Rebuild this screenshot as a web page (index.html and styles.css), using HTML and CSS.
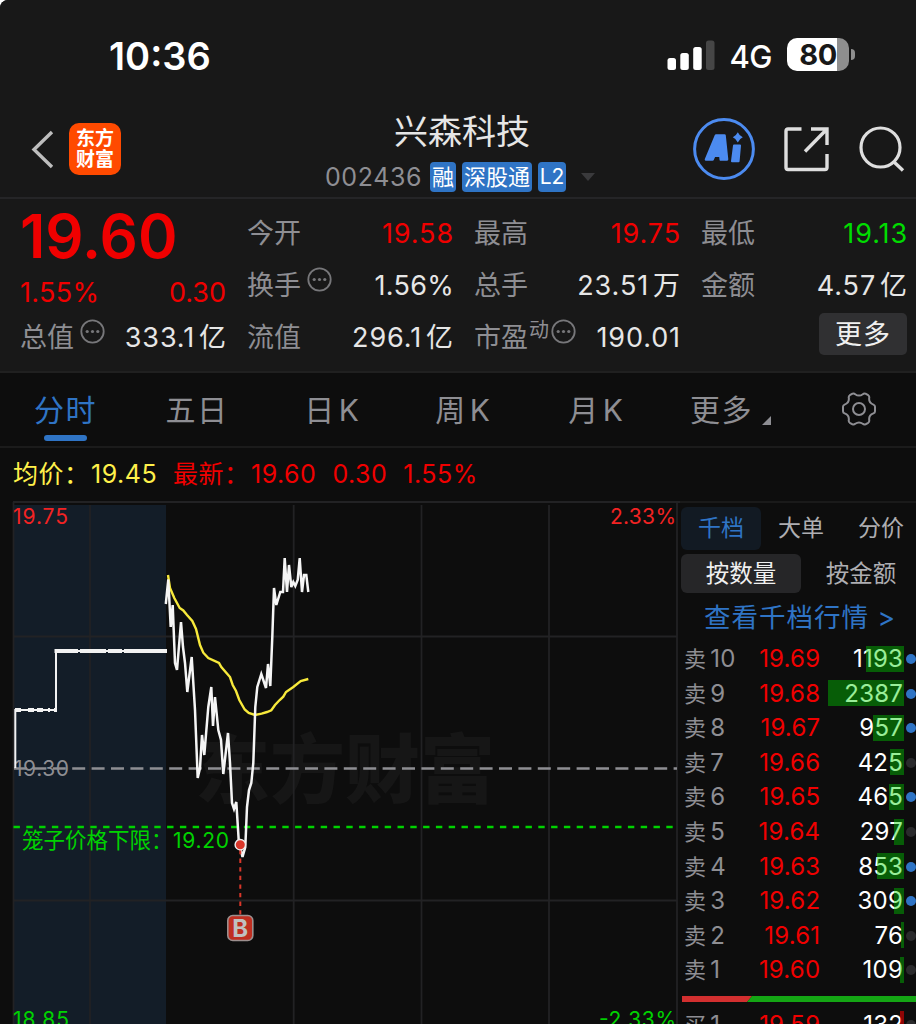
FILE: index.html
```html
<!DOCTYPE html>
<html lang="zh-CN">
<head>
    <meta charset="UTF-8">
    <meta name="viewport" content="width=device-width, initial-scale=1.0">
    <title>兴森科技 002436</title>
    <link rel="stylesheet" href="styles.css">
</head>
<body>
    <div class="app">
        <div class="status-bar">
            <span class="clock">10:36</span>
            <div class="status-icons">
                <svg class="signal" width="48" height="32" viewBox="0 0 48 32">
                    <rect x="0.5" y="18" width="8.5" height="12" rx="2.5" fill="#fff"/>
                    <rect x="13.3" y="13" width="8.5" height="17" rx="2.5" fill="#fff"/>
                    <rect x="26.2" y="7" width="8.5" height="23" rx="2.5" fill="#fff"/>
                    <rect x="39" y="0.5" width="8.5" height="29.5" rx="2.5" fill="#464646"/>
                </svg>
                <span class="network">4G</span>
                <div class="battery"><span>80</span></div>
                <div class="battery-cap"></div>
            </div>
        </div>

        <header class="header">
            <div class="header-left">
                <svg width="26" height="40" viewBox="0 0 26 40">
                    <path d="M22 3 L4 20.5 L22 38" fill="none" stroke="#bdbdbd" stroke-width="3.4"/>
                </svg>
                <div class="logo"><span>东方</span><span>财富</span></div>
            </div>
            <div class="header-title">
                <h1>兴森科技</h1>
                <div class="stock-code">
                    <span class="code">002436</span>
                    <span class="tag tag-rong">融</span>
                    <span class="tag tag-sgt">深股通</span>
                    <span class="tag tag-l2">L2</span>
                    <span class="caret"></span>
                </div>
            </div>
            <div class="header-right">
                <svg width="62" height="62" viewBox="0 0 62 62">
                    <circle cx="31" cy="31" r="29.4" fill="none" stroke="#4c8bf0" stroke-width="3"/>
                    <path fill="#4c8bf0" stroke="#4c8bf0" stroke-width="2.6" stroke-linejoin="round" fill-rule="evenodd" d="M23 17.5 H31.5 L34 41.5 H27.8 L27.4 37.6 H21.3 L19.6 41.5 H13 Z M26.8 25.8 L23.8 32.6 H27.2 Z"/>
                    <path fill="#4c8bf0" stroke="#4c8bf0" stroke-width="2" stroke-linejoin="round" d="M41 27.6 H47 L45.6 43.2 H39 Z"/>
                    <path fill="#4c8bf0" d="M44.8 14.2 Q46.5 17.8 49.8 19.3 Q46.5 20.8 44.8 24.4 Q43.1 20.8 39.8 19.3 Q43.1 17.8 44.8 14.2 Z"/>
                </svg>
                <svg class="icon-share" width="46" height="46" viewBox="0 0 46 46">
                    <path d="M17.5 3 H4 Q2 3 2 5 V41.5 Q2 43.5 4 43.5 H41 Q43 43.5 43 41.5 V28" fill="none" stroke="#dedede" stroke-width="3.4"/>
                    <path d="M27 3 H43 V19 M43 3 L21 25.5" fill="none" stroke="#dedede" stroke-width="3.4"/>
                </svg>
                <svg class="icon-search" width="48" height="48" viewBox="0 0 48 48">
                    <circle cx="21.5" cy="21.5" r="19.5" fill="none" stroke="#dedede" stroke-width="3.2"/>
                    <path d="M34.5 35.5 L44 44.5" stroke="#dedede" stroke-width="3.4"/>
                </svg>
            </div>
        </header>

        <section class="quote">
            <div class="quote-col">
                <div class="price">19.60</div>
                <div class="change"><span class="pct">1.55%</span><span>0.30</span></div>
                <div class="item">
                    <span class="label">总值<svg class="info" viewBox="0 0 25 25"><use href="#info"/></svg></span>
                    <span class="value">333.1<i>亿</i></span>
                </div>
            </div>
            <div class="quote-col">
                <div class="item"><span class="label">今开</span><span class="value red">19.58</span></div>
                <div class="item">
                    <span class="label">换手<svg class="info" viewBox="0 0 25 25"><use href="#info"/></svg></span>
                    <span class="value pct">1.56%</span>
                </div>
                <div class="item"><span class="label">流值</span><span class="value">296.1<i>亿</i></span></div>
            </div>
            <div class="quote-col">
                <div class="item"><span class="label">最高</span><span class="value red">19.75</span></div>
                <div class="item"><span class="label">总手</span><span class="value">23.51<i>万</i></span></div>
                <div class="item">
                    <span class="label">市盈<sup>动</sup><svg class="info info-tight" viewBox="0 0 25 25"><use href="#info"/></svg></span>
                    <span class="value">190.01</span>
                </div>
            </div>
            <div class="quote-col">
                <div class="item"><span class="label">最低</span><span class="value green">19.13</span></div>
                <div class="item"><span class="label">金额</span><span class="value">4.57<i>亿</i></span></div>
                <div class="item item-more"><button class="more-btn">更多</button></div>
            </div>
        </section>

        <nav class="tabs">
            <a class="tab active">分时</a>
            <a class="tab">五日</a>
            <a class="tab"><span>日<b>K</b></span></a>
            <a class="tab"><span>周<b>K</b></span></a>
            <a class="tab"><span>月<b>K</b></span></a>
            <a class="tab tab-more">更多<span class="corner"></span></a>
            <a class="tab tab-settings">
                <svg width="36" height="34" viewBox="0 0 36 34">
                    <path fill="none" stroke="#8e8e93" stroke-width="2" stroke-linejoin="round" d="M11.5 1.6 Q13 1 14.2 2.2 Q18 5 21.8 2.2 Q23 1 24.5 1.6 L27.2 3.2 Q28.6 4.2 28.2 6 Q27.6 10.8 32.4 12.6 Q34 13.2 34 14.8 V19.2 Q34 20.8 32.4 21.4 Q27.6 23.2 28.2 28 Q28.6 29.8 27.2 30.8 L24.5 32.4 Q23 33 21.8 31.8 Q18 29 14.2 31.8 Q13 33 11.5 32.4 L8.8 30.8 Q7.4 29.8 7.8 28 Q8.4 23.2 3.6 21.4 Q2 20.8 2 19.2 V14.8 Q2 13.2 3.6 12.6 Q8.4 10.8 7.8 6 Q7.4 4.2 8.8 3.2 Z"/>
                    <circle cx="18" cy="17" r="6" fill="none" stroke="#8e8e93" stroke-width="2"/>
                </svg>
            </a>
        </nav>

        <div class="summary">
            <span class="avg">均价：<b>19.45</b></span>
            <span class="latest">最新：<b>19.60</b></span>
            <span class="latest">0.30</span>
            <span class="latest">1.55%</span>
        </div>

        <main class="main">
            <svg class="chart" width="680" height="523" viewBox="0 501 680 523">
                <rect x="14" y="505" width="152" height="519" fill="#131d28"/>
                <text class="watermark" x="195" y="797" textLength="300">东方财富</text>

                <!-- grid -->
                <g stroke="#222224" stroke-width="1.8">
                    <path d="M13 502 H680 M13.5 502 V1024 M677 502 V1024"/>
                    <path d="M90 505 V1024 M293.7 505 V1024 M421.5 505 V1024 M549 505 V1024"/>
                    <path d="M13 636.5 H677 M13 900.5 H677"/>
                </g>

                <text class="axis" x="13" y="523.5" textLength="55" fill="#f22323">19.75</text>
                <text class="axis" x="610" y="523.5" textLength="66" fill="#f22323">2.33%</text>
                <text class="axis" x="14" y="775.5" textLength="55" fill="#8e8e93">19.30</text>
                <text class="axis" x="13" y="1027" textLength="56" fill="#00d200">18.85</text>
                <text class="axis" x="599" y="1027" textLength="77" fill="#00d200">-2.33%</text>

                <path d="M14 768.5 H677" stroke="#8e8e93" stroke-width="2.4" stroke-dasharray="13 6.4"/>
                <path d="M13.5 827 H677" stroke="#00d200" stroke-width="2.4" stroke-dasharray="6.4 6.4"/>
                <text class="limit" x="22" y="848">笼子价格下限：</text>
                <text class="axis" x="173" y="848" textLength="56" fill="#00d200">19.20</text>

                <!-- pre-open -->
                <path d="M15.3 768 V710 H56 V651 H167" fill="none" stroke="#f2f2f2" stroke-width="2"/>
                <path d="M15 710 H21 M28 710 H34 M37 710 H43 M48 710 H50 M54 710 H57 M54.5 651 H78 M80 651 H106 M108 651 H122 M124 651 H167" stroke="#f2f2f2" stroke-width="4"/>

                <polyline class="line-avg" points="168,575 170,588 174.3,598 179.7,608 183.3,610.5 187,615 192.3,621 196,629 200,645 203.3,652.7 208.3,658 219,663 221.3,667 230,677 232.7,685 236,691 239.3,700 244.7,709.5 248.7,713 255,715 261.7,713.7 267,712 271.3,710.3 275,705 279.7,700 283.3,696.7 286,692 293.3,687 300.7,681 308.3,679"/>
                <polyline class="line-price" points="165.8,604 168.3,579.5 170.7,627 172.7,605 175,663 177,670 181,622 183,647 185,663 187.3,692 191.7,657 195,710 197.7,778 200,768 202,735 204.3,755 208.3,707 211.3,687 213,726 215,697 218.3,730 221,740 223.3,774 228,733 230,763 232,803 234,809 236.3,802 238.7,840 242.5,857 245.3,847 247,807 249,790 251.3,783 253.3,763 255.3,707 257.3,687 261.3,674 266,688 268,664 270.3,686 272.3,637 274,588 276.3,605 280.3,592 283,592 284.7,558 287,592 289,565 291.3,587 293.3,582 295.3,586 297.7,580 299.7,558 302,592 304,575 306.3,575 308.3,592"/>

                <!-- buy marker -->
                <path d="M240.3 850 V915" stroke="#d9372a" stroke-width="2" stroke-dasharray="4.3 4.3"/>
                <circle cx="240.3" cy="844.7" r="5.2" fill="#d9372a" stroke="#eee" stroke-width="1.4"/>
                <rect x="227.8" y="915.5" width="25" height="25" rx="5" fill="#bf2e20" stroke="#9c8f8e" stroke-width="1.6"/>
                <text class="buy" x="240.3" y="936.5">B</text>
            </svg>

            <aside class="book">
                <div class="book-tabs">
                    <span class="book-tab active">千档</span>
                    <span class="book-tab">大单</span>
                    <span class="book-tab">分价</span>
                </div>
                <div class="book-modes">
                    <span class="mode active">按数量</span>
                    <span class="mode">按金额</span>
                </div>
                <a class="book-link">查看千档行情 <b>&gt;</b></a>
                <ul class="levels">
                    <li><span class="lv">卖<b>10</b></span><span class="px">19.69</span><span class="vol">1193<i style="width:38px"></i></span><em class="on"></em></li>
                    <li><span class="lv">卖<b>9</b></span><span class="px">19.68</span><span class="vol">2387<i style="width:76px"></i></span><em class="on"></em></li>
                    <li><span class="lv">卖<b>8</b></span><span class="px">19.67</span><span class="vol">957<i style="width:30.5px"></i></span><em class="on"></em></li>
                    <li><span class="lv">卖<b>7</b></span><span class="px">19.66</span><span class="vol">425<i style="width:13.5px"></i></span><em></em></li>
                    <li><span class="lv">卖<b>6</b></span><span class="px">19.65</span><span class="vol">465<i style="width:15px"></i></span><em class="on"></em></li>
                    <li><span class="lv">卖<b>5</b></span><span class="px">19.64</span><span class="vol">297<i style="width:9.5px"></i></span><em></em></li>
                    <li><span class="lv">卖<b>4</b></span><span class="px">19.63</span><span class="vol">853<i style="width:27px"></i></span><em class="on"></em></li>
                    <li><span class="lv">卖<b>3</b></span><span class="px">19.62</span><span class="vol">309<i style="width:10px"></i></span><em class="on"></em></li>
                    <li><span class="lv">卖<b>2</b></span><span class="px">19.61</span><span class="vol">76<i style="width:2.5px"></i></span><em></em></li>
                    <li><span class="lv">卖<b>1</b></span><span class="px">19.60</span><span class="vol">109<i style="width:3.5px"></i></span><em></em></li>
                </ul>
                <svg class="ratio" width="234" height="6" viewBox="0 0 234 6">
                    <path d="M0 0 H70 L65 6 H0 Z" fill="#d22f2f"/>
                    <path d="M70 0 H234 V6 H65 Z" fill="#14a514"/>
                </svg>
                <ul class="levels buy-levels">
                    <li><span class="lv">买<b>1</b></span><span class="px">19.59</span><span class="vol">132<i style="width:4px"></i></span><em></em></li>
                </ul>
            </aside>
        </main>
    </div>

    <svg class="defs" width="0" height="0">
        <symbol id="info" viewBox="0 0 25 25">
            <circle cx="12.5" cy="12.5" r="11.2" fill="none" stroke="#77777a" stroke-width="1.8"/>
            <circle cx="7.2" cy="12.5" r="1.6" fill="#77777a"/>
            <circle cx="12.5" cy="12.5" r="1.6" fill="#77777a"/>
            <circle cx="17.8" cy="12.5" r="1.6" fill="#77777a"/>
        </symbol>
    </svg>
</body>
</html>
```
FILE: styles.css
```css
* {
    box-sizing: border-box;
}
body {
    margin: 0;
    background: #fff;
    font-family: Inter, "Noto Sans CJK SC", sans-serif;
    color: #e6e6e6;
}
b, i, em {
    font-weight: inherit;
    font-style: normal;
}
.app {
    width: 916px;
    height: 1024px;
    overflow: hidden;
    background: #0d0d0d;
    border-top-left-radius: 8px;
}
.defs {
    position: absolute;
}

/* status bar */
.status-bar {
    height: 102px;
    padding: 8px 61px 0 109px;
    display: flex;
    justify-content: space-between;
    align-items: center;
    background: #181818;
    color: #fff;
}
.clock {
    margin-top: 2px;
    font-size: 38px;
    font-weight: 600;
}
.status-icons {
    display: flex;
    align-items: center;
}
.signal {
    margin: 1px 0 0 -1px;
}
.network {
    margin: 2px 15px 0 14px;
    font-size: 31px;
    font-weight: 500;
    letter-spacing: -0.5px;
}
.battery {
    width: 62px;
    height: 33px;
    margin-top: -1px;
    border-radius: 10px;
    background: linear-gradient(to right, #fff 50px, #8e8e8e 50px);
    color: #181818;
    font-size: 29px;
    font-weight: 700;
    letter-spacing: -0.5px;
    line-height: 33px;
    text-align: center;
}
.battery-cap {
    width: 4px;
    height: 11px;
    margin: -1px 0 0 2px;
    border-radius: 0 5px 5px 0;
    background: #8e8e8e;
}

/* header */
.header {
    height: 97px;
    display: flex;
    border-bottom: 2px solid #252527;
    background: #181818;
}
.header-left {
    width: 325px;
    padding: 21px 0 0 30px;
    display: flex;
    align-items: flex-start;
    gap: 13px;
}
.header-left svg {
    margin-top: 6px;
}
.logo {
    width: 52px;
    height: 52px;
    padding-top: 5px;
    border-radius: 10px;
    background: #ff4a00;
    color: #fff;
    display: flex;
    flex-direction: column;
    align-items: center;
    font-size: 19px;
    font-weight: 700;
    line-height: 21px;
}
.header-title {
    width: 272px;
}
.header-title h1 {
    margin: 6px 0 0 2px;
    font-size: 34px;
    font-weight: 400;
    line-height: 48px;
    text-align: center;
}
.stock-code {
    height: 30px;
    margin-top: 6px;
    display: flex;
    align-items: center;
}
.code {
    width: 105px;
    color: #8e8e93;
    font-size: 25px;
    letter-spacing: 0.6px;
}
.tag {
    height: 30px;
    margin-right: 6px;
    border-radius: 4px;
    background: #2f74c5;
    color: #fff;
    font-size: 22px;
    line-height: 30px;
    text-align: center;
}
.tag-rong {
    width: 26px;
}
.tag-sgt {
    width: 70px;
}
.tag-l2 {
    width: 28px;
    font-size: 21px;
}
.caret {
    margin-left: 9px;
    border: 7.5px solid transparent;
    border-top: 8px solid #3a3a3c;
    border-bottom: 0;
}
.header-right {
    padding: 16px 0 0 96px;
    display: flex;
    align-items: flex-start;
}
.icon-share {
    margin: 8px 0 0 29px;
}
.icon-search {
    margin: 8px 0 0 29px;
}

/* quote */
.quote {
    height: 174px;
    padding: 8px 9px 0 20px;
    display: grid;
    grid-template-columns: repeat(4, 206px);
    column-gap: 21px;
    border-bottom: 2px solid #202020;
    background: #181818;
}
.price {
    height: 60px;
    color: #f00000;
    font-size: 60px;
    font-weight: 600;
    line-height: 59px;
}
.change {
    height: 44px;
    padding-top: 7px;
    display: flex;
    justify-content: space-between;
    color: #f00000;
    font-size: 27px;
    line-height: 38px;
}
.item {
    height: 52px;
    display: flex;
    justify-content: space-between;
    align-items: center;
    font-size: 27px;
    line-height: 52px;
    white-space: nowrap;
}
.label {
    padding-top: 2px;
    display: flex;
    align-items: center;
    color: #8e8e93;
}
.label sup {
    margin: -16px 0 0 1px;
    font-size: 20px;
    line-height: 24px;
}
.info {
    width: 25px;
    height: 25px;
    margin: -14px 0 0 6px;
}
.info-tight {
    margin-left: 2px;
}
.value {
    padding-top: 1px;
    margin-right: -1px;
    letter-spacing: 0.9px;
}
.pct {
    letter-spacing: 0.3px;
}
.value i {
    margin-left: 4px;
}
.red {
    color: #f00000;
}
.green {
    color: #00dc00;
}
.item-more {
    justify-content: flex-end;
    align-items: flex-start;
}
.more-btn {
    width: 88px;
    height: 42px;
    margin-top: 2px;
    padding: 2px 0 0;
    border: 0;
    border-radius: 5px;
    background: #303032;
    color: #f0f0f0;
    font: 27px/40px Inter, "Noto Sans CJK SC", sans-serif;
    letter-spacing: 1px;
}

/* period tabs */
.tabs {
    height: 75px;
    display: grid;
    grid-template-columns: 131px 132px 137px 125px 141px 132px 118px;
    border-bottom: 2px solid #1b1b1b;
}
.tab {
    display: flex;
    flex-direction: column;
    align-items: center;
    color: #8e8e93;
    font-size: 30px;
    letter-spacing: 1.5px;
    line-height: 74px;
}
.tab b {
    margin-left: 3px;
    letter-spacing: 0;
}
.tab.active {
    color: #2f74c5;
}
.tab.active::after {
    content: "";
    width: 43px;
    height: 6px;
    margin-top: -12px;
    border-radius: 3px;
    background: #2f74c5;
}
.tab-more {
    flex-direction: row;
    padding-left: 24px;
}
.corner {
    margin: 20px 0 0 9px;
    border-left: 9px solid transparent;
    border-bottom: 9px solid #8e8e93;
}
.tab-settings svg {
    margin: 19px 0 0 4px;
}

/* summary line */
.summary {
    height: 53px;
    padding: 6px 0 0 13px;
    display: flex;
    align-items: baseline;
    gap: 16px;
    font-size: 25px;
    letter-spacing: 0.5px;
}
.avg {
    width: 144px;
    color: #fff04a;
    white-space: nowrap;
}
.avg b,
.latest b {
    margin-left: 1.5px;
}
.latest {
    color: #f00000;
    white-space: nowrap;
}

/* chart */
.main {
    display: flex;
    height: 523px;
}
.chart {
    flex: none;
}
.chart text {
    font-family: Inter, "Noto Sans CJK SC", sans-serif;
}
.chart .axis {
    font-size: 21px;
}
.chart .limit {
    font-size: 21.5px;
    fill: #00d200;
}
.chart .watermark {
    font-size: 75px;
    font-weight: 900;
    fill: #161616;
}
.chart .buy {
    font-size: 24px;
    font-weight: 700;
    text-anchor: middle;
    fill: #c0c0c0;
}
.line-avg {
    fill: none;
    stroke: #f7e93b;
    stroke-width: 2.4;
}
.line-price {
    fill: none;
    stroke: #f5f5f5;
    stroke-width: 2.5;
}

/* order book */
.book {
    width: 236px;
    padding-left: 1px;
    border-top: 2px solid #1a1a1a;
}
.book-tabs {
    height: 43px;
    margin-top: 4px;
    display: flex;
    font-size: 23px;
    line-height: 43px;
    text-align: center;
    color: #aeaeb2;
}
.book-tab {
    flex: none;
    width: 80px;
    border-radius: 6px;
}
.book-tab.active {
    background: #121a23;
    color: #2f74c5;
}
.book-modes {
    height: 39px;
    margin-top: 4px;
    display: flex;
    font-size: 23.5px;
    line-height: 40px;
    text-align: center;
    color: #aeaeb2;
}
.mode {
    flex: none;
    width: 120px;
    border-radius: 6px;
}
.mode.active {
    background: #262628;
    color: #f0f0f0;
}
.book-link {
    display: block;
    height: 49px;
    padding-left: 23px;
    color: #2f74c5;
    font-size: 26.5px;
    letter-spacing: 1px;
    line-height: 49px;
    white-space: nowrap;
}
.levels {
    margin: 0;
    padding: 0;
    list-style: none;
}
.levels li {
    height: 34.55px;
    padding-left: 3px;
    display: flex;
    align-items: center;
    font-size: 24px;
    letter-spacing: 0.2px;
    line-height: 34px;
}
.lv {
    width: 60px;
    display: flex;
    color: #8e8e93;
    font-size: 22px;
}
.lv b {
    margin-left: 4px;
    font-size: 24px;
}
.px {
    width: 77.5px;
    color: #f00000;
    text-align: right;
}
.vol {
    position: relative;
    width: 83.5px;
    color: #fff;
    text-align: right;
}
.vol i {
    position: absolute;
    top: 3.5px;
    right: -0.5px;
    height: 26px;
    background: rgba(0, 215, 0, 0.4);
}
.buy-levels .vol i {
    background: rgba(230, 0, 0, 0.6);
}
.levels em {
    flex: none;
    width: 10px;
    height: 10px;
    margin-left: 3px;
    border-radius: 50%;
    background: #2a2a2c;
}
.levels em.on {
    background: #2f74c5;
}
.ratio {
    display: block;
    margin: 9px 0 5px 1px;
}
```
